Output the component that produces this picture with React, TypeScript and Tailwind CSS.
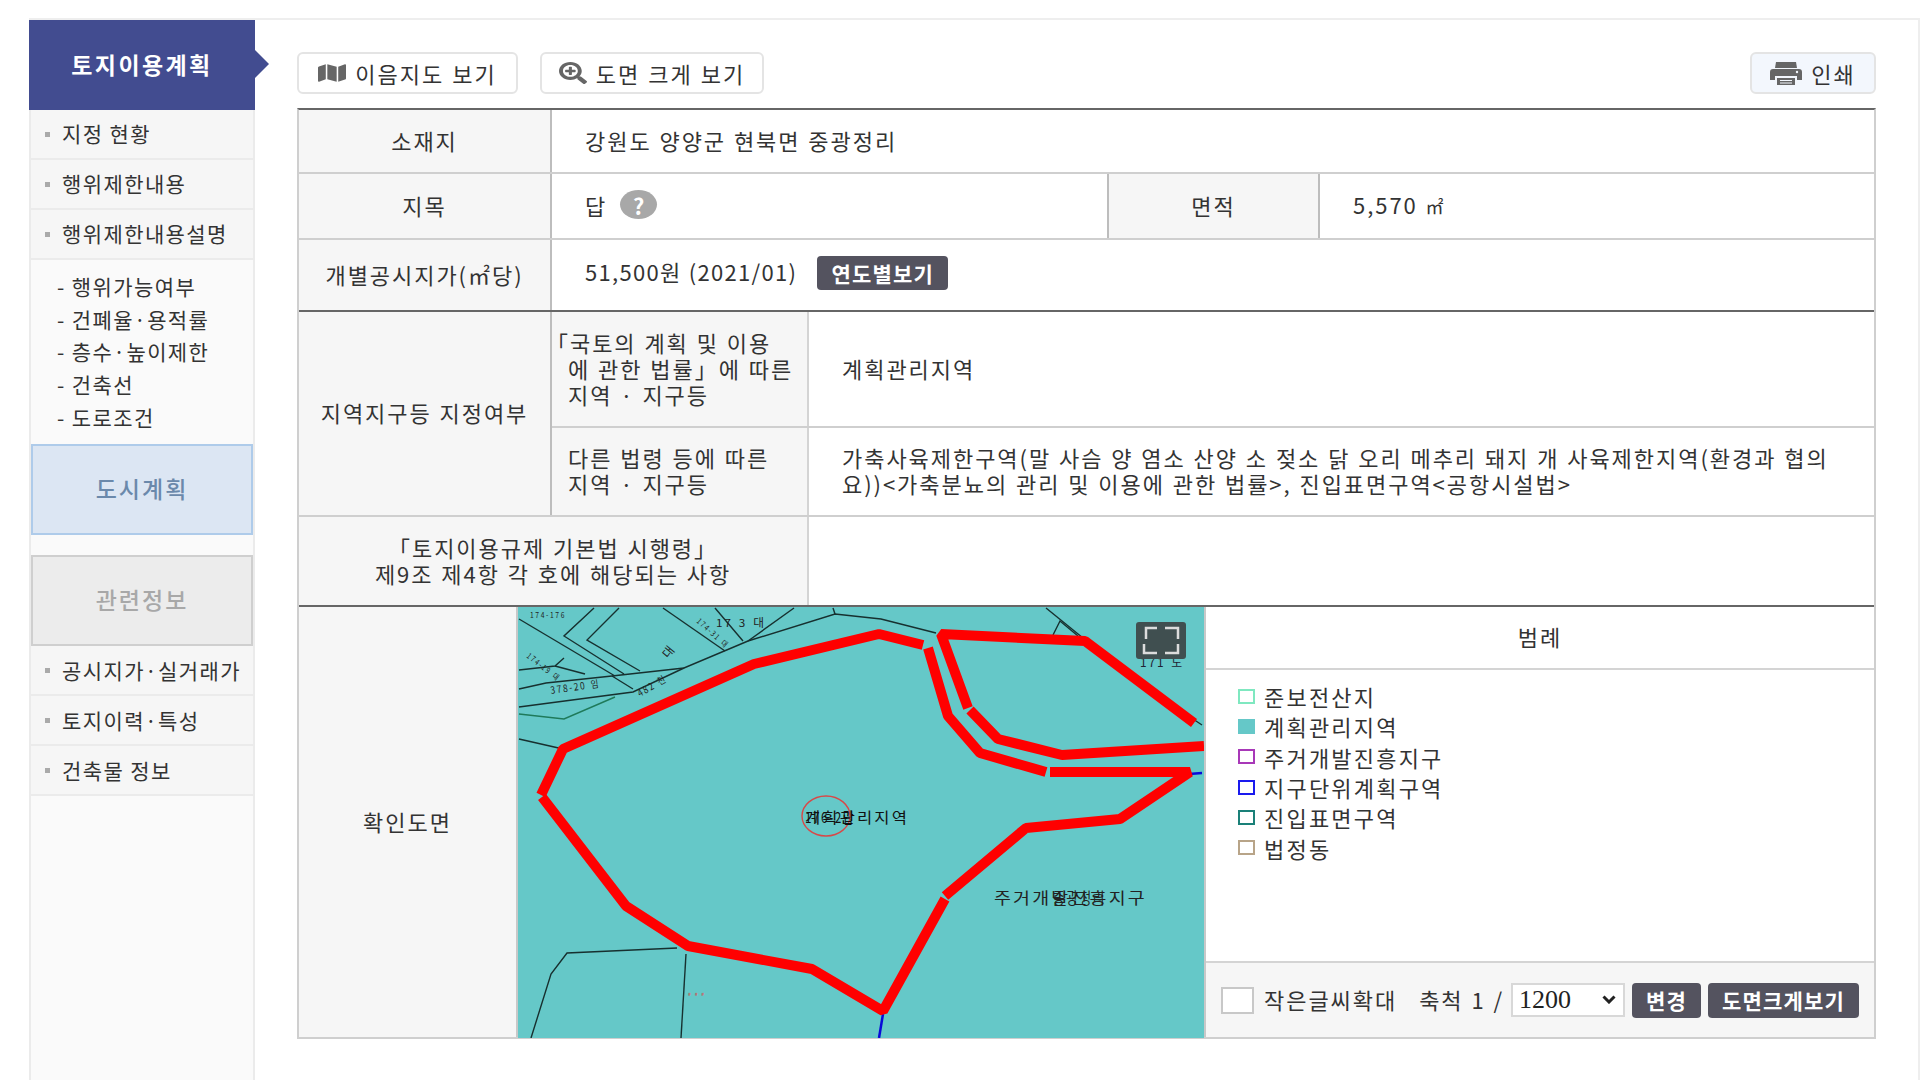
import {FaMap, FaSearchPlus} from 'react-icons/fa';

const body = "text-[22px] leading-[26px] tracking-[1.95px] [word-spacing:1px] text-[#333]";
const labelCell = "flex items-center justify-center pb-[3px] text-center bg-[#f6f6f6]";
const valueCell = "flex items-center pl-[33px] pb-[3px]";
const subLabel = "flex items-center w-[257px] pl-[16px] pb-[3px] bg-[#f6f6f6] border-r-2 border-[#d4d4d4]";
const darkBtn = "flex items-center justify-center rounded bg-[#54535f] text-white font-bold text-[21px] tracking-[1.2px]";
const topBtn = "flex items-center justify-center gap-[9px] h-[42px] rounded-md border-2 border-[#e4e4e4] bg-white text-[22px] tracking-[2px] [word-spacing:1px] text-[#333]";
const rowLine = "border-b-2 border-[#cfcfcf]";

const menuTop = ['지정 현황', '행위제한내용', '행위제한내용설명'];
const menuSub = ['행위가능여부', '건폐율·용적률', '층수·높이제한', '건축선', '도로조건'];
const menuBottom = ['공시지가·실거래가', '토지이력·특성', '건축물 정보'];

const legend = [
    {name: '준보전산지', box: 'border-[#7fe8c0] bg-white'},
    {name: '계획관리지역', box: 'border-[#65c8c8] bg-[#65c8c8]'},
    {name: '주거개발진흥지구', box: 'border-[#a838b8] bg-white'},
    {name: '지구단위계획구역', box: 'border-[#1a1aee] bg-white'},
    {name: '진입표면구역', box: 'border-[#1a8078] bg-white'},
    {name: '법정동', box: 'border-[#b8a488] bg-white'},
];

const MenuRow = ({text}: {text: string}) => (
    <div className="flex items-center h-[50px] pl-[14px] gap-[12px] bg-[#f6f6f6] border-b-2 border-[#ebebeb] text-[21px] tracking-[1.4px] text-[#333]">
        <span className="w-[5px] h-[5px] bg-[#aaa]"></span>
        {text}
    </div>
);

const PrintIcon = () => (
    <svg viewBox="0 0 32 23" className="w-[32px] h-[23px] text-[#666]" fill="currentColor">
        <path d="M6 0H26L27 6H5Z"/>
        <path d="M3 7H29Q32 7 32 10V18H27V14H5V18H0V10Q0 7 3 7Z"/>
        <path d="M7 16H25V23H7Z"/>
        <path d="M10 18H22V19H10ZM10 20.5H22V21.5H10Z" fill="#f3f7fd"/>
        <circle cx="27" cy="10" r="1.2" fill="#f3f7fd"/>
    </svg>
);

const ParcelMap = () => (
    <svg viewBox="0 0 686 431" className="block w-[686px] h-[431px] shrink-0">
        <rect width="686" height="431" fill="#65c8c8"/>
        <g fill="none" stroke="#17302f" strokeWidth="1.4">
            <polyline points="1,12 97,69"/>
            <polyline points="76,1 46,29 106,67"/>
            <polyline points="101,1 69,33 122,64"/>
            <polyline points="145,1 207,44"/>
            <polyline points="197,1 225,34"/>
            <polyline points="1,63 37,59 46,51"/>
            <polyline points="37,59 67,67"/>
            <polyline points="1,82 28,76 94,69 166,61 230,34 317,7 363,12 418,26"/>
            <polyline points="94,69 115,82"/>
            <polyline points="1,100 115,85 166,61"/>
            <polyline points="230,34 276,1"/>
            <polyline points="317,7 315,1"/>
            <polyline points="1,132 45,142"/>
            <polyline points="528,1 565,31"/>
            <polyline points="535,28 542,14 560,29"/>
            <polyline points="675,112 684,118"/>
            <polyline points="159,341 49,346 33,367 13,431"/>
            <polyline points="168,347 163,431"/>
        </g>
        <polyline points="1,107 46,112 97,90" fill="none" stroke="#1f7a5a" strokeWidth="1.4"/>
        <polyline points="365,407 361,431" fill="none" stroke="#0a0ad8" strokeWidth="2.5"/>
        <polyline points="671,167 684,166" fill="none" stroke="#0a0ad8" strokeWidth="2.5"/>
        <g fill="none" stroke="#ff0000" strokeWidth="10" strokeLinejoin="bevel">
            <polyline points="405,38 361,27 236,57 45,142 23,188"/>
            <polyline points="410,41 430,109 462,146 528,165"/>
            <polyline points="532,165 672,165 602,212 508,221 427,289"/>
            <polyline points="427,292 365,404 294,362 170,339 108,299 24,190"/>
            <polyline points="676,116 567,34 423,27 450,101"/>
            <polyline points="452,103 480,132 544,148 686,139"/>
        </g>
        <ellipse cx="308" cy="209" rx="24" ry="20" fill="none" stroke="#d84848" strokeWidth="1.4"/>
        <g fontFamily="'Noto Sans CJK KR', sans-serif" fill="#222">
            <text x="12" y="11" fontSize="8" textLength="36" lengthAdjust="spacingAndGlyphs">174-176</text>
            <text x="8" y="50" fontSize="8" textLength="40" lengthAdjust="spacingAndGlyphs" transform="rotate(38 8 50)">174-19 대</text>
            <text x="33" y="87" fontSize="10" textLength="50" lengthAdjust="spacingAndGlyphs" transform="rotate(-8 33 87)">378-20 임</text>
            <text x="122" y="90" fontSize="10" textLength="32" lengthAdjust="spacingAndGlyphs" transform="rotate(-30 122 90)">482 천</text>
            <text x="178" y="15" fontSize="8" textLength="40" lengthAdjust="spacingAndGlyphs" transform="rotate(42 178 15)">174-31 대</text>
            <text x="198" y="20" fontSize="11" textLength="50" lengthAdjust="spacingAndGlyphs">17 3 대</text>
            <text x="150" y="52" fontSize="12" transform="rotate(-50 150 52)">대</text>
            <text x="287" y="216" fontSize="15" textLength="50" lengthAdjust="spacingAndGlyphs" fill="#111">176-2답</text>
            <text x="287" y="216" fontSize="15" textLength="104" lengthAdjust="spacingAndGlyphs" fill="#111">계획관리지역</text>
            <text x="476" y="297" fontSize="16" textLength="153" lengthAdjust="spacingAndGlyphs" fill="#222">주거개발진흥지구</text>
            <text x="535" y="297" fontSize="16" textLength="53" lengthAdjust="spacingAndGlyphs" fill="#222">중광정리</text>
            <text x="622" y="60" fontSize="12" textLength="44" lengthAdjust="spacingAndGlyphs" fill="#223">171 도</text>
            <text x="170" y="389" fontSize="5" fill="#ee2020" textLength="18"># # #</text>
        </g>
        <rect x="618" y="15" width="50" height="37" rx="3" fill="#404f50"/>
        <path d="M628 32V21H639 M647 21H660V32 M660 37V46H647 M639 46H626V37" fill="none" stroke="#dcdcdc" strokeWidth="2.5"/>
    </svg>
);

const App = () => {
    return (
        <div className="w-[1920px] h-[1080px] overflow-hidden bg-white pt-[18px] pl-[29px] font-['Noto_Sans_CJK_KR',sans-serif]">
            <div className="flex h-[1062px] border-t-2 border-r-2 border-[#eeeeee]">
                <aside className="w-[226px] shrink-0 bg-[#fafafa] border-x-2 border-[#ebebeb]">
                    <div className="relative flex items-center justify-center h-[90px] -mx-[2px] pb-[2px] bg-[#424c90] text-white font-bold text-[23px] tracking-[2.4px]">
                        토지이용계획
                        <span className="absolute right-[-14px] top-[30px] border-y-[14px] border-l-[14px] border-y-transparent border-l-[#424c90]"></span>
                    </div>
                    {menuTop.map(m => <MenuRow key={m} text={m}/>)}
                    <ul className="pt-[10px] pb-[11px] pl-[26px]">
                        {menuSub.map(m => (
                            <li key={m} className="h-[32.7px] leading-[32px] text-[21px] tracking-[1.4px] text-[#333]">- {m}</li>
                        ))}
                    </ul>
                    <div className="flex items-center justify-center h-[91px] pb-[3px] border-2 border-[#aecbea] bg-[#dce6f3] text-[23px] tracking-[2px] text-[#6b89ab] font-medium">
                        도시계획
                    </div>
                    <div className="h-[20px]"></div>
                    <div className="flex items-center justify-center h-[91px] pb-[3px] border-2 border-[#cfcfcf] bg-[#ececec] text-[23px] tracking-[2px] text-[#a8a8a8] font-medium">
                        관련정보
                    </div>
                    {menuBottom.map(m => <MenuRow key={m} text={m}/>)}
                </aside>

                <main className="w-[1579px] ml-[42px]">
                    <div className="flex items-center pt-[32px] pb-[14px]">
                        <button className={`${topBtn} w-[221px]`}>
                            <FaMap className="w-[28px] h-[20px] text-[#666]" preserveAspectRatio="none"/>
                            이음지도 보기
                        </button>
                        <button className={`${topBtn} w-[224px] ml-[22px]`}>
                            <FaSearchPlus className="w-[28px] h-[22px] text-[#666]" preserveAspectRatio="none"/>
                            도면 크게 보기
                        </button>
                        <button className={`${topBtn} w-[126px] ml-auto !bg-[#f3f7fd]`}>
                            <PrintIcon/>
                            인쇄
                        </button>
                    </div>

                    <div className={`border-t-2 border-[#666] border-x-2 border-x-[#cfcfcf] ${body}`}>
                        <div className={`flex h-[64px] ${rowLine}`}>
                            <div className={`${labelCell} w-[253px] border-r-2 border-[#bdbdbd]`}>소재지</div>
                            <div className={valueCell}>강원도 양양군 현북면 중광정리</div>
                        </div>
                        <div className={`flex h-[66px] ${rowLine}`}>
                            <div className={`${labelCell} w-[253px] border-r-2 border-[#bdbdbd]`}>지목</div>
                            <div className={`${valueCell} w-[555px] gap-[13px]`}>
                                답
                                <span className="flex items-center justify-center w-[37px] h-[29px] rounded-[50%] bg-[#a8a8a8] text-white font-bold text-[22px] tracking-normal">?</span>
                            </div>
                            <div className={`${labelCell} w-[213px] border-x-2 border-[#bdbdbd]`}>면적</div>
                            <div className={valueCell}>
                                <span>5,570 <span className="text-[18px]">㎡</span></span>
                            </div>
                        </div>
                        <div className="flex h-[72px] border-b-2 border-[#666]">
                            <div className={`${labelCell} w-[253px] border-r-2 border-[#bdbdbd]`}>개별공시지가(㎡당)</div>
                            <div className="flex items-center pl-[33px] pb-[5px]">
                                <span className="pb-[3px] tracking-[1.3px]">51,500원 (2021/01)</span>
                                <button className={`${darkBtn} w-[131px] h-[34px] ml-[20px]`}>연도별보기</button>
                            </div>
                        </div>

                        <div className={`flex h-[205px] ${rowLine}`}>
                            <div className={`${labelCell} w-[253px] border-r-2 border-[#bdbdbd]`}>지역지구등 지정여부</div>
                            <div className="flex-1">
                                <div className="flex h-[116px] border-b-2 border-[#cfcfcf]">
                                    <div className={subLabel}>
                                        <div className="-ml-[22px]">
                                            「국토의 계획 및 이용<br/>
                                            <span className="pl-[22px]">에 관한 법률」에 따른</span><br/>
                                            <span className="pl-[22px]">지역 · 지구등</span>
                                        </div>
                                    </div>
                                    <div className={valueCell}>계획관리지역</div>
                                </div>
                                <div className="flex h-[87px]">
                                    <div className={subLabel}>
                                        <div>다른 법령 등에 따른<br/>지역 · 지구등</div>
                                    </div>
                                    <div className={valueCell}>
                                        <div className="whitespace-nowrap">
                                            가축사육제한구역(말 사슴 양 염소 산양 소 젖소 닭 오리 메추리 돼지 개 사육제한지역(환경과 협의<br/>
                                            요))&lt;가축분뇨의 관리 및 이용에 관한 법률&gt;, 진입표면구역&lt;공항시설법&gt;
                                        </div>
                                    </div>
                                </div>
                            </div>
                        </div>
                        <div className="flex h-[90px] border-b-2 border-[#666]">
                            <div className={`${labelCell} w-[510px] border-r-2 border-[#d4d4d4]`}>
                                <div>「토지이용규제 기본법 시행령」<br/>제9조 제4항 각 호에 해당되는 사항</div>
                            </div>
                        </div>

                        <div className={`flex h-[432px] ${rowLine}`}>
                            <div className={`${labelCell} w-[219px] border-r-2 border-[#c8c8c8]`}>확인도면</div>
                            <ParcelMap/>
                            <div className="flex-1 flex flex-col border-l-2 border-[#c8c8c8]">
                                <div className="flex items-center justify-center h-[63px] pb-[3px] border-b-2 border-[#d4d4d4]">범례</div>
                                <ul className="flex-1 pt-[11px] pl-[32px] tracking-[2.2px]">
                                    {legend.map(l => (
                                        <li key={l.name} className="flex items-center gap-[9px] h-[30.3px]">
                                            <span className={`w-[17px] h-[15px] border-2 ${l.box}`}></span>
                                            {l.name}
                                        </li>
                                    ))}
                                </ul>
                                <div className="flex items-center h-[76px] pl-[15px] bg-[#f6f6f6] border-t-2 border-[#d4d4d4]">
                                    <span className="w-[33px] h-[27px] bg-white border-2 border-[#c8c8c8]"></span>
                                    <span className="ml-[10px] pb-[3px]">작은글씨확대</span>
                                    <span className="ml-[22px] pb-[3px]">축척 1 /</span>
                                    <div className="relative ml-[7px]">
                                        <select defaultValue="1200" className="block appearance-none w-[114px] h-[34px] pl-[6px] bg-white border-2 border-[#d8d8d8] font-['Liberation_Serif',serif] text-[26px] text-[#222] tracking-normal">
                                            <option>1200</option>
                                        </select>
                                        <svg viewBox="0 0 14 9" className="absolute right-[9px] top-[12px] w-[14px] h-[9px] text-[#222]" fill="none" stroke="currentColor" strokeWidth="3">
                                            <path d="M1.5 1.5L7 7L12.5 1.5"/>
                                        </svg>
                                    </div>
                                    <button className={`${darkBtn} w-[69px] h-[35px] ml-[7px]`}>변경</button>
                                    <button className={`${darkBtn} w-[151px] h-[35px] ml-[7px]`}>도면크게보기</button>
                                </div>
                            </div>
                        </div>
                    </div>
                </main>
            </div>
        </div>
    );
};

export default App;
